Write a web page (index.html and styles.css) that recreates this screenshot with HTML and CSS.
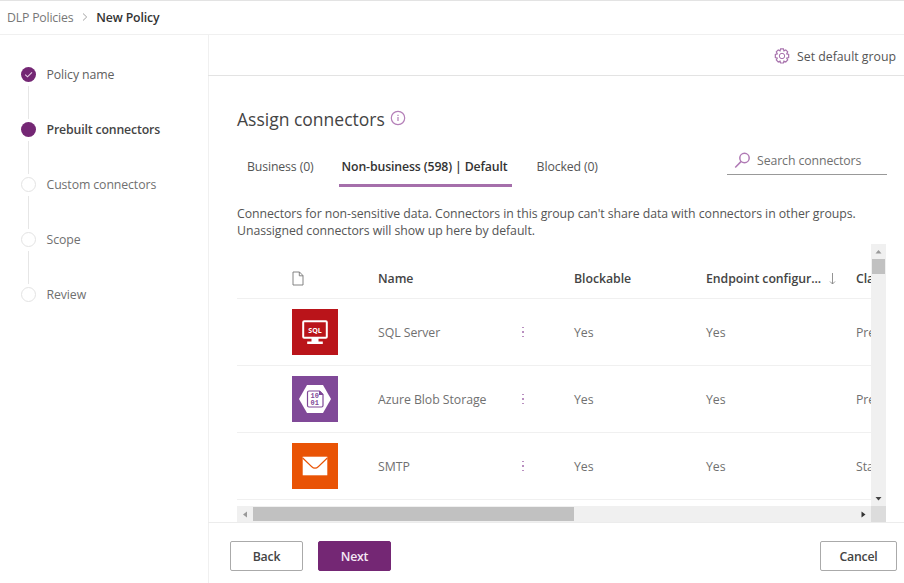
FILE: index.html
```html
<!DOCTYPE html>
<html lang="en">
<head>
<meta charset="utf-8">
<title>New Policy</title>
<link rel="stylesheet" href="styles.css">
</head>
<body>
<div class="app">
  <header class="crumbs">
    <span class="crumb">DLP Policies</span>
    <svg class="chevron" width="6" height="8" viewBox="0 0 6 8"><path d="M1 .5 4.7 4 1 7.5" fill="none" stroke="#999" stroke-width=".9"/></svg>
    <span class="crumb current">New Policy</span>
  </header>
  <div class="body">
    <nav class="steps">
      <div class="step"><span class="dot done"><svg width="15" height="15" viewBox="0 0 15 15"><path d="M4.2 7.7 6.5 9.8 11 5.4" fill="none" stroke="#e6cfe6" stroke-width="1.1"/></svg></span><span>Policy name</span></div>
      <div class="step active"><span class="dot done"></span><span>Prebuilt connectors</span></div>
      <div class="step"><span class="dot"></span><span>Custom connectors</span></div>
      <div class="step"><span class="dot"></span><span>Scope</span></div>
      <div class="step"><span class="dot"></span><span>Review</span></div>
    </nav>
    <main class="main">
      <div class="commands">
        <svg width="16" height="16" viewBox="0 0 16 16" fill="none" stroke="#a873ad"><path d="M6.700 1h2.600l.5 1.700 1.700-.8 1.800 1.800-.9 1.700 1.800.5v2.900l-1.800.5.9 1.700-1.800 1.800-1.700-.8-.5 1.700H6.700l-.5-1.700-1.700.8-1.800-1.800.9-1.700L1.800 8.800V5.900l1.800-.5-.9-1.700 1.800-1.800 1.700.8z" transform="translate(-.6 -.2) scale(1.075 1.110)" stroke-width="1.100"/><circle cx="8" cy="8" r="2.700"/></svg>
        <span>Set default group</span>
      </div>
      <section class="content">
        <h1 class="title"><span>Assign connectors</span>
          <svg width="16" height="16" viewBox="0 0 16 16"><circle cx="8" cy="8" r="6.700" fill="none" stroke="#b47fb8" stroke-width="1.200"/><path d="M8 7v4M8 4.700v1.200" stroke="#b47fb8" stroke-width="1.200"/></svg>
        </h1>
        <div class="toolbar">
          <div class="tabs">
            <span class="tab">Business (0)</span>
            <span class="tab selected">Non-business (598) | Default</span>
            <span class="tab">Blocked (0)</span>
          </div>
          <div class="search">
            <svg width="17" height="17" viewBox="0 0 17 17" fill="none" stroke="#b07ab5" stroke-width="1.500"><circle cx="10.500" cy="6" r="4.700"/><path d="M7.200 9.400 1.200 15.500"/></svg>
            <span>Search connectors</span>
          </div>
        </div>
        <p class="desc"><span>Connectors for non-sensitive data. Connectors in this group can't share data with connectors in other groups.</span><br><span>Unassigned connectors will show up here by default.</span></p>
        <div class="frame">
          <div class="table">
            <div class="row head">
              <span class="pic"><svg width="12" height="15" viewBox="0 0 12 15"><path d="M1 1h6.500L11 4.600V14H1zM7.300 1v3.800H11" fill="none" stroke="#777" stroke-width=".9"/></svg></span>
              <span>Name</span><span></span><span>Blockable</span>
              <span class="endpoint"><span>Endpoint configur...</span><svg width="7" height="12" viewBox="0 0 7 12"><path d="M3.500 0v11M1 8.500 3.500 11 6 8.500" fill="none" stroke="#888" stroke-width=".9"/></svg></span>
              <span>Class</span>
            </div>
            <div class="row">
              <span class="pic"><svg width="46" height="46" viewBox="0 0 46 46"><path fill="#ba141a" d="M0 0h46v46H0z"/><rect x="11.200" y="12.200" width="23.600" height="16.600" rx="1" fill="none" stroke="#fff" stroke-width="2"/><path fill="#fff" d="M19.500 29h7v3.500h4.300v2.500H15.200v-2.500h4.300z"/><text x="23" y="23.600" text-anchor="middle" class="sql">SQL</text></svg></span>
              <span>SQL Server</span><span class="more"><i></i><i></i><i></i></span><span>Yes</span><span>Yes</span><span>Premium</span>
            </div>
            <div class="row">
              <span class="pic"><svg width="46" height="46" viewBox="0 0 46 46"><path fill="#804998" d="M0 0h46v46H0z"/><path fill="#fff" d="M15 9h16l8 14-8 14H15L7 23z"/><path d="M17 15h10.500l3.500 3.500V29.500q0 1.500-1.500 1.500H17q-1.500 0-1.500-1.500V16.500Q15.500 15 17 15z" fill="#fff" stroke="#804998" stroke-width="1.200"/><path fill="#804998" d="M27 15h1l3 3v1h-4z"/><text x="22.800" y="22.300" text-anchor="middle" class="bits">10</text><text x="22.800" y="29.300" text-anchor="middle" class="bits">01</text></svg></span>
              <span>Azure Blob Storage</span><span class="more"><i></i><i></i><i></i></span><span>Yes</span><span>Yes</span><span>Premium</span>
            </div>
            <div class="row">
              <span class="pic"><svg width="46" height="46" viewBox="0 0 46 46"><path fill="#e95305" d="M0 0h46v46H0z"/><path fill="#fff" d="M10.700 13.700h24.600v18.600H10.700z"/><path d="M10.700 15 19.500 23.500q3.500 3.400 7 0L35.300 15" fill="none" stroke="#e95305" stroke-width="1.100"/></svg></span>
              <span>SMTP</span><span class="more"><i></i><i></i><i></i></span><span>Yes</span><span>Yes</span><span>Standard</span>
            </div>
          </div>
          <div class="vbar"><svg width="15" height="15" viewBox="0 0 15 15"><path fill="#999" d="M4.500 9.500h6l-3-3.500z"/></svg><b class="vthumb"></b><svg class="end" width="15" height="15" viewBox="0 0 15 15"><path fill="#444" d="M4.500 6h6l-3 3.500z"/></svg></div>
          <div class="hbar"><svg width="16" height="15" viewBox="0 0 16 15"><path fill="#999" d="M10 4.500v6l-4-3z"/></svg><b class="hthumb"></b><svg class="end" width="16" height="15" viewBox="0 0 16 15"><path fill="#333" d="M6.500 4.500v6l4-3z"/></svg></div>
          <div class="corner"></div>
        </div>
      </section>
      <footer class="footer">
        <button class="btn">Back</button>
        <button class="btn primary">Next</button>
        <button class="btn cancel">Cancel</button>
      </footer>
    </main>
  </div>
</div>
</body>
</html>
```
FILE: styles.css
```css
* { box-sizing: border-box; }
body { margin: 0; background: #fff; color: #555; font: 12.3px/17px "Open Sans", "Noto Sans", sans-serif; letter-spacing: -0.2px; }
svg { display: block; flex: none; }
span { white-space: nowrap; }
.app { width: 904px; height: 583px; overflow: hidden; display: flex; flex-direction: column; border-top: 1px solid #e3e3e3; }
.crumbs { height: 34px; flex: none; display: flex; align-items: center; padding-left: 7px; border-bottom: 1px solid #f0f0f0; color: #777; }
.chevron { margin: 0 8px 2px 9px; }
.current { color: #333; font-weight: 600; letter-spacing: -0.15px; }
.body { flex: 1; min-height: 0; display: flex; }
.steps { width: 208.500px; flex: none; padding: 32px 0 0 21px; border-right: 1px solid #f0f0f0; letter-spacing: -0.1px; }
.step { height: 55px; display: grid; grid-template: 15px 40px / 15px auto; column-gap: 10.500px; justify-content: start; line-height: 15px; color: #707070; }
.step:not(:last-child)::after { content: ""; width: 1.500px; height: 33px; margin: 4px auto 0; background: #e6e6e6; }
.step:first-child { color: #606060; }
.step.active { color: #444; font-weight: 600; letter-spacing: -0.15px; }
.dot { width: 15px; height: 15px; border-radius: 50%; border: 1.500px solid #e3e3e3; }
.dot.done { border: 0; background: #742774; }
.main { flex: 1; min-width: 0; margin-left: -.5px; display: flex; flex-direction: column; }
.commands { height: 41px; flex: none; display: flex; align-items: center; justify-content: flex-end; gap: 7px; padding: 2px 8px 0 0; border-bottom: 1px solid #e3e3e3; letter-spacing: 0; }
.content { height: 446px; flex: none; padding: 28px 17px 0 29px; }
.title { height: 30px; margin: 0; display: flex; align-items: center; gap: 5px; font-size: 17.500px; line-height: 30px; font-weight: 400; letter-spacing: 0; color: #444; }
.title svg { margin-bottom: 2px; }
.toolbar { height: 53px; display: flex; justify-content: space-between; }
.tabs { display: flex; gap: 25px; padding: 24px 0 0 10px; letter-spacing: -0.13px; }
.tab { height: 29px; line-height: 18px; }
.selected { padding: 0 4px 0 3px; color: #333; font-weight: 600; border-bottom: 3px solid #a56fab; }
.search { width: 160px; height: 29px; margin-top: 12px; display: flex; align-items: center; gap: 6px; padding-left: 7px; border-bottom: 1px solid #999; color: #707070; letter-spacing: -0.1px; }
.desc { height: 57px; margin: 0; padding-top: 18px; letter-spacing: -0.06px; }
.frame { display: grid; grid-template: 262px 16px / 634px 15px; letter-spacing: -0.05px; }
.table { overflow: hidden; }
.row { height: 67px; width: 720px; display: grid; grid-template-columns: 141px 139px 57px 132px 150px 100px; align-items: center; border-bottom: 1px solid #f0f0f0; color: #707070; }
.row.head { height: 55px; padding-top: 15px; color: #444; font-weight: 600; }
.pic { padding-left: 55px; }
.endpoint { display: flex; align-items: center; gap: 8px; }
.more { display: grid; gap: 3px; padding-left: 5px; }
.more i { width: 1.500px; height: 1.500px; background: #b98fc0; }
.sql { font: 700 7px "Open Sans", sans-serif; fill: #fff; letter-spacing: 0; }
.bits { font: 700 7px "Liberation Mono", monospace; fill: #804998; letter-spacing: 0; }
.vbar { background: #f0f0f0; display: flex; flex-direction: column; }
.vthumb { height: 15px; margin: 0 1px; background: #c1c1c1; }
.vbar .end { margin-top: auto; }
.hbar { background: #f0f0f0; display: flex; align-items: center; }
.hthumb { width: 321px; height: 14px; background: #c1c1c1; }
.hbar .end { margin-left: auto; }
.corner { background: #dcdcdc; }
.footer { flex: 1; display: flex; align-items: flex-start; gap: 15px; padding: 18px 7px 0 22px; border-top: 1px solid #ececec; }
.btn { width: 73px; height: 30px; padding: 0; font: inherit; font-weight: 600; letter-spacing: inherit; color: #444; background: #fff; border: 1px solid #aaa; border-radius: 2px; }
.primary { background: #742774; border-color: #742774; color: #f4e9f4; }
.cancel { width: 77px; margin-left: auto; }
```
